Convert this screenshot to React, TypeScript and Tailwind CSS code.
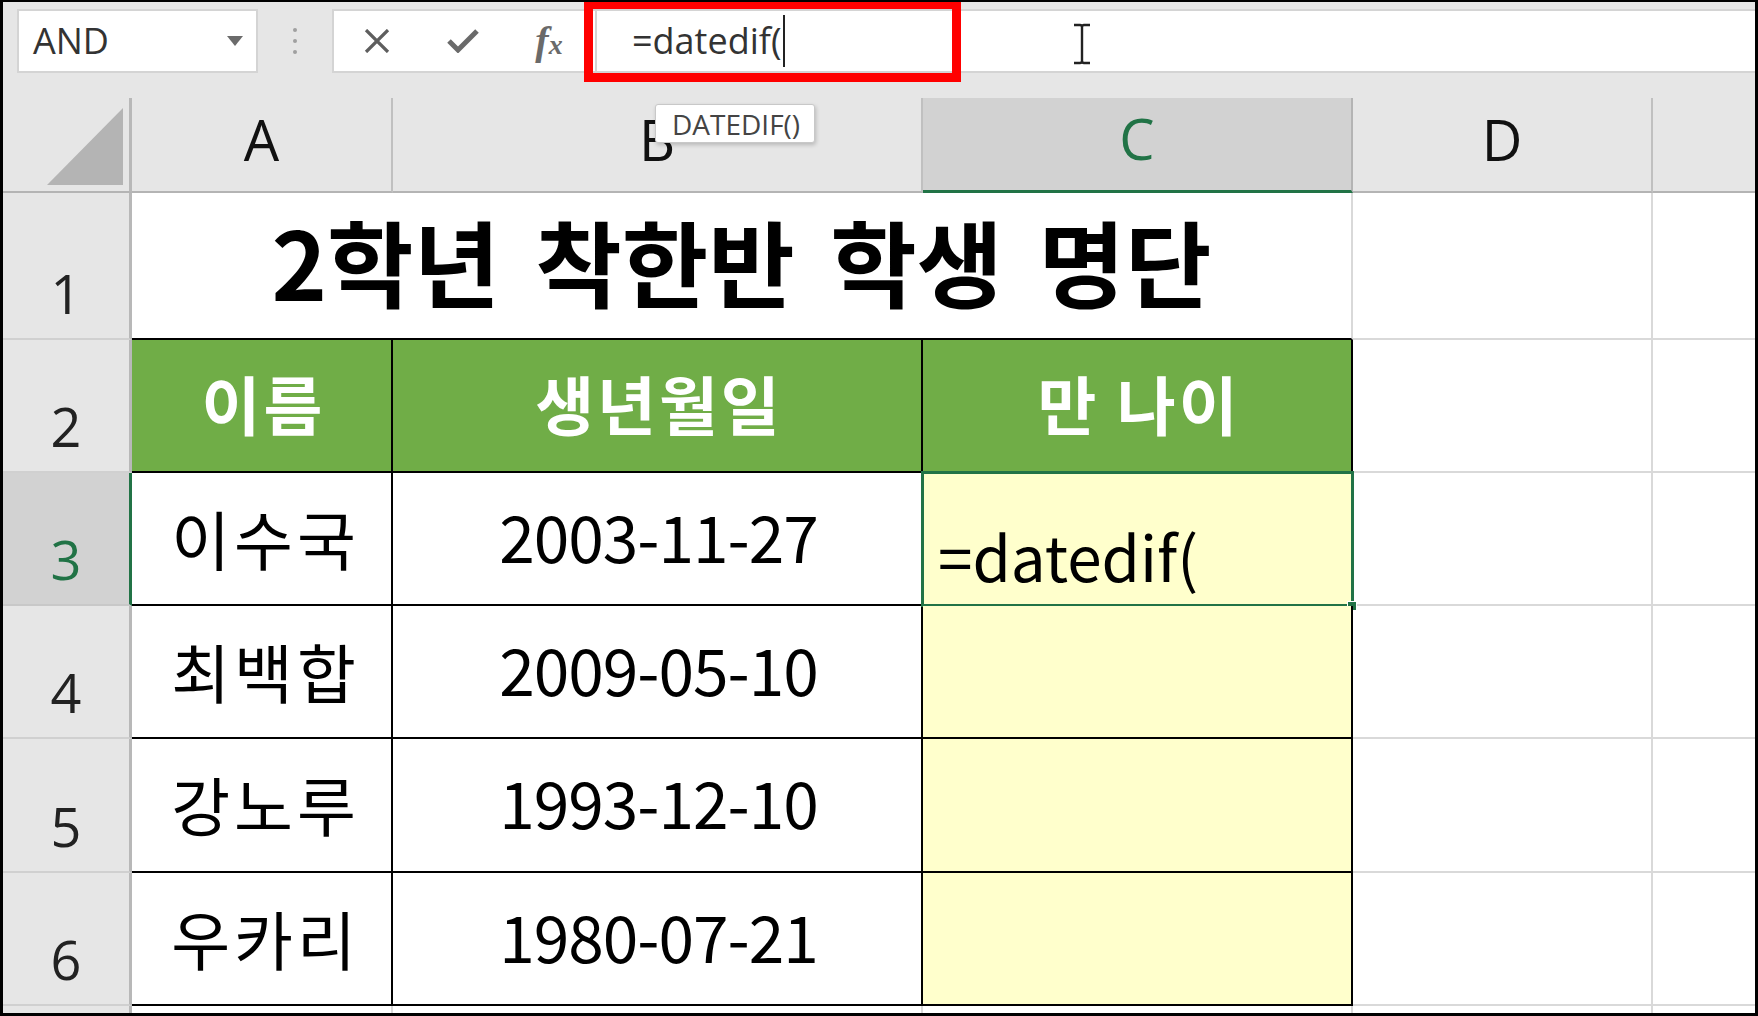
import React from 'react';

const rows: { name: string; date: string; h: string }[] = [
  { name: '이수국', date: '2003-11-27', h: 'h-[133px]' },
  { name: '최백합', date: '2009-05-10', h: 'h-[133px]' },
  { name: '강노루', date: '1993-12-10', h: 'h-[134px]' },
  { name: '우카리', date: '1980-07-21', h: 'h-[133px]' },
];

function RowHead({ n, active }: { n: number; active?: boolean }) {
  return (
    <div
      className={
        active
          ? "w-[129px] shrink-0 flex items-end justify-center pb-[18px] bg-[#d2d2d2] border-r-[3px] border-r-[#217346] border-b-2 border-b-[#c8c8c8] text-[#217346] font-['Open_Sans','Liberation_Sans',sans-serif] font-normal text-[54px] leading-none tracking-normal"
          : "w-[129px] shrink-0 flex items-end justify-center pb-[18px] bg-[#e6e6e6] border-r-[3px] border-r-[#b8b8b8] border-b-2 border-b-[#d0d0d0] text-[#222] font-['Open_Sans','Liberation_Sans',sans-serif] font-normal text-[54px] leading-none tracking-normal"
      }
    >
      {n}
    </div>
  );
}

function GridTail() {
  return (
    <>
      <div className="w-[300px] shrink-0 bg-white border-r-2 border-b-2 border-[#d9d9d9]" />
      <div className="flex-1 bg-white border-b-2 border-[#d9d9d9]" />
    </>
  );
}

export default function App() {
  return (
    <div className="relative w-[1758px] h-[1016px] overflow-hidden bg-[#e6e6e6] border-t-2 border-r-[3px] border-b-[3px] border-l-[3px] border-black flex flex-col">
      {/* Formula bar */}
      <div className="h-[96px] shrink-0 flex items-start pt-[7px] pl-[14px]">
        <div className="w-[241px] h-[64px] bg-white border-2 border-[#d4d4d4] flex items-center justify-between pl-[14px] pr-[13px]">
          <span className="font-['Open_Sans','Liberation_Sans',sans-serif] text-[36px] leading-none text-[#333]">AND</span>
          <svg width="16" height="10" viewBox="0 0 16 10">
            <polygon points="0,0 16,0 8,10" fill="#6b6b6b" />
          </svg>
        </div>
        <div className="w-[74px] h-[64px] flex flex-col items-center justify-center gap-[7px]">
          <span className="w-[4px] h-[4px] rounded-full bg-[#a0a0a0]" />
          <span className="w-[4px] h-[4px] rounded-full bg-[#a0a0a0]" />
          <span className="w-[4px] h-[4px] rounded-full bg-[#a0a0a0]" />
        </div>
        <div className="w-[263px] h-[64px] bg-white border-2 border-r-0 border-[#d4d4d4] flex items-center">
          <div className="w-[86px] flex justify-center">
            <svg width="26" height="24" viewBox="0 0 26 24">
              <path d="M2 1L24 23M24 1L2 23" stroke="#5e5e5e" strokeWidth="3.2" />
            </svg>
          </div>
          <div className="w-[86px] flex justify-center">
            <svg width="32" height="24" viewBox="0 0 32 24">
              <path d="M2 12L11 21L30 2" stroke="#6a6a6a" strokeWidth="5" fill="none" />
            </svg>
          </div>
          <div className="w-[86px] flex justify-center items-baseline text-[#6a6a6a] font-['Liberation_Serif',serif] italic">
            <span className="text-[40px] leading-none font-bold">f</span>
            <span className="text-[28px] leading-none font-bold">x</span>
          </div>
        </div>
        <div className="flex-1 h-[64px] bg-white border-2 border-r-0 border-[#d4d4d4] flex items-center pl-[35px]">
          <span className="font-['Open_Sans','Liberation_Sans',sans-serif] text-[36px] leading-none text-[#333]">=datedif(</span>
          <span className="w-[2px] h-[52px] bg-[#222] ml-[1px]" />
        </div>
      </div>

      {/* Column headers */}
      <div className="h-[95px] shrink-0 flex font-['Open_Sans','Liberation_Sans',sans-serif] text-[56px] leading-none">
        <div className="w-[129px] shrink-0 border-r-[3px] border-r-[#b8b8b8] border-b-2 border-b-[#b4b4b4] flex items-end justify-end pr-[6px] pb-[6px]">
          <svg width="76" height="77" viewBox="0 0 76 77">
            <polygon points="0,77 76,77 76,0" fill="#b4b4b4" />
          </svg>
        </div>
        <div className="w-[261px] shrink-0 border-r-2 border-r-[#c0c0c0] border-b-2 border-b-[#b4b4b4] flex items-center justify-center pb-[12px] text-[#111]">A</div>
        <div className="w-[530px] shrink-0 border-r-2 border-r-[#c0c0c0] border-b-2 border-b-[#b4b4b4] flex items-center justify-center pb-[12px] text-[#111]">B</div>
        <div className="w-[430px] shrink-0 bg-[#d2d2d2] border-r-2 border-r-[#b4b4b4] border-b-[3px] border-b-[#217346] flex items-center justify-center pb-[12px] text-[#217346]">C</div>
        <div className="w-[300px] shrink-0 border-r-2 border-r-[#c0c0c0] border-b-2 border-b-[#b4b4b4] flex items-center justify-center pb-[12px] text-[#111]">D</div>
        <div className="flex-1 border-b-2 border-b-[#b4b4b4]" />
      </div>

      {/* Row 1 */}
      <div className="h-[147px] shrink-0 flex">
        <RowHead n={1} />
        <div className="w-[1221px] shrink-0 bg-white border-r-2 border-r-[#d9d9d9] border-b-2 border-b-black flex items-center justify-center pb-[12px] font-['Noto_Sans_CJK_KR','Noto_Sans',sans-serif] font-bold text-[94px] leading-none text-black [word-spacing:14px]">
          2학년 착한반 학생 명단
        </div>
        <GridTail />
      </div>

      {/* Row 2 */}
      <div className="h-[133px] shrink-0 flex font-['Noto_Sans_CJK_KR','Noto_Sans',sans-serif] font-bold text-[64px] leading-none text-white tracking-[3px]">
        <RowHead n={2} />
        <div className="w-[261px] shrink-0 bg-[#70ad47] border-r-2 border-b-2 border-black flex items-center justify-center pb-[8px] pl-[4px]">이름</div>
        <div className="w-[530px] shrink-0 bg-[#70ad47] border-r-2 border-b-2 border-black flex items-center justify-center pb-[8px] pl-[4px]">생년월일</div>
        <div className="w-[430px] shrink-0 bg-[#70ad47] border-r-2 border-b-2 border-black flex items-center justify-center pb-[8px] pl-[4px]">만 나이</div>
        <GridTail />
      </div>

      {/* Data rows */}
      {rows.map((r, i) => (
        <div key={r.name} className={`${r.h} shrink-0 flex font-['Noto_Sans_CJK_KR','Noto_Sans',sans-serif] text-black leading-none`}>
          <RowHead n={i + 3} active={i === 0} />
          <div className="w-[261px] shrink-0 bg-white border-r-2 border-b-2 border-black flex items-center justify-center pb-[4px] pl-[8px] text-[64px] tracking-[4px]">{r.name}</div>
          <div className="w-[530px] shrink-0 bg-white border-r-2 border-b-2 border-black flex items-center justify-center pb-[8px] pl-[3px] text-[64px] tracking-[-1px]">{r.date}</div>
          <div className="relative w-[430px] shrink-0 bg-[#ffffcc] border-r-2 border-b-2 border-black flex items-end pl-[15px] pb-[18px] text-[62px]">
            {i === 0 && (
              <>
                <span>=datedif(</span>
                <div className="absolute top-[-2px] left-[-2px] w-[433px] h-[136px] border-[3px] border-[#217346]" />
                <div className="absolute left-[424px] top-[128px] w-[10px] h-[10px] bg-[#217346] border border-white" />
              </>
            )}
          </div>
          <GridTail />
        </div>
      ))}

      {/* Partial row 7 */}
      <div className="flex-1 flex">
        <div className="w-[129px] shrink-0 bg-[#e6e6e6] border-r-[3px] border-r-[#b8b8b8]" />
        <div className="w-[261px] shrink-0 bg-white border-r-2 border-[#d9d9d9]" />
        <div className="w-[530px] shrink-0 bg-white border-r-2 border-[#d9d9d9]" />
        <div className="w-[430px] shrink-0 bg-white border-r-2 border-[#d9d9d9]" />
        <div className="w-[300px] shrink-0 bg-white border-r-2 border-[#d9d9d9]" />
        <div className="flex-1 bg-white" />
      </div>

      {/* Overlays */}
      <div className="absolute left-[652px] top-[102px] w-[160px] h-[39px] bg-white border border-[#c8c8c8] rounded-[3px] shadow-[1px_2px_4px_rgba(0,0,0,0.2)] flex items-center pl-[16px] font-['Open_Sans','Liberation_Sans',sans-serif] text-[28px] leading-none text-[#444]">
        DATEDIF()
      </div>
      <div className="absolute left-[581px] top-[-2px] w-[377px] h-[82px] border-[9px] border-[#ff0000]" />
      <svg className="absolute left-[1069px] top-[21px]" width="20" height="42" viewBox="0 0 20 42">
        <path d="M2 2H8Q10 2 10 4Q10 2 12 2H18M10 4V38M2 40H8Q10 40 10 38Q10 40 12 40H18" stroke="#222" strokeWidth="2.4" fill="none" />
      </svg>
    </div>
  );
}
